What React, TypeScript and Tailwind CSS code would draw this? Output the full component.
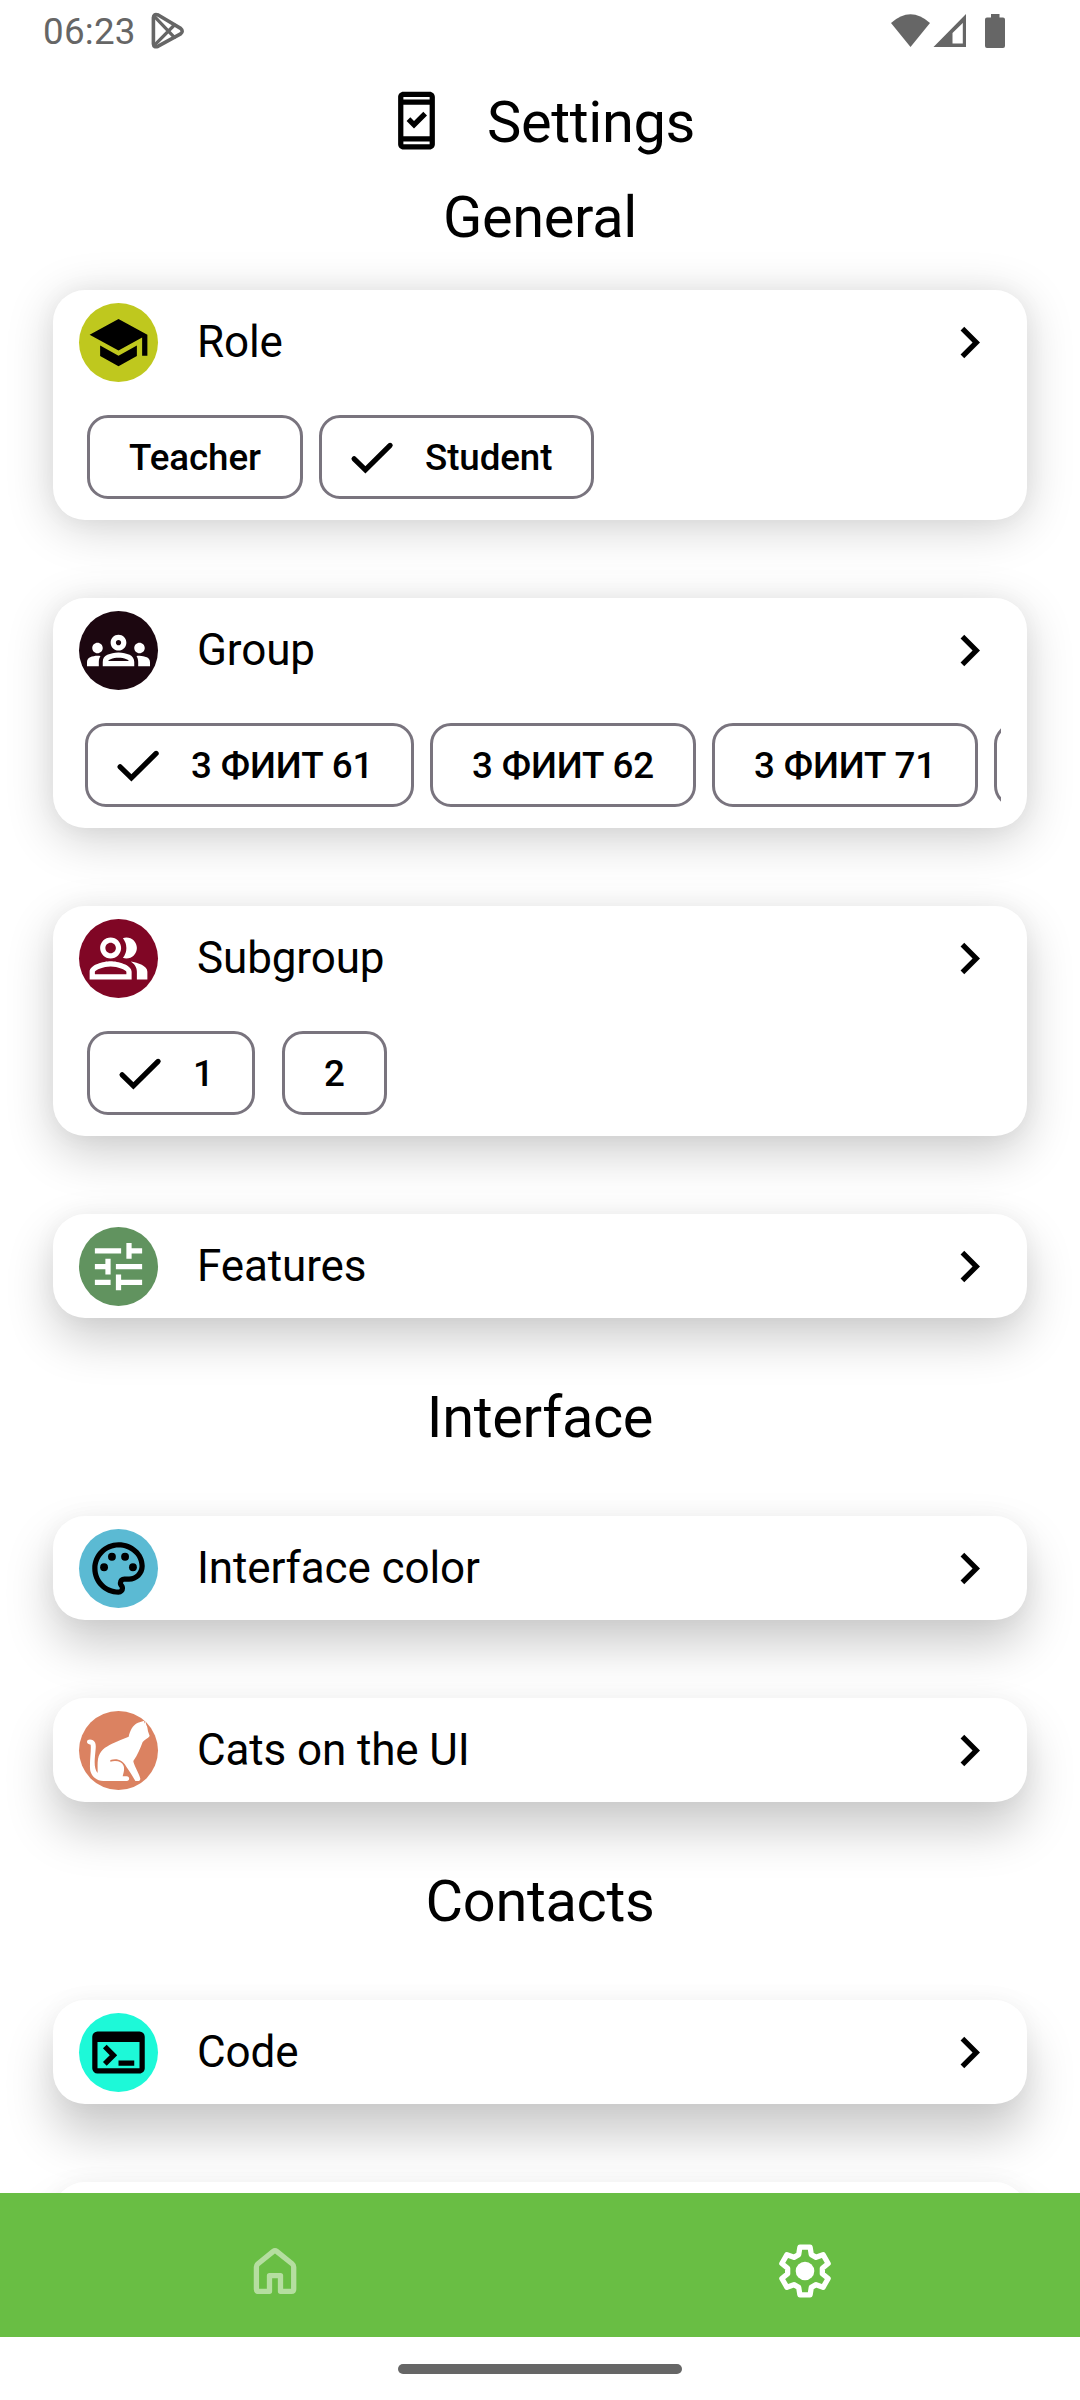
import type { ReactNode } from "react";
import {
  MdChevronRight,
  MdOutlineGroups,
  MdOutlinePalette,
  MdOutlinePeopleAlt,
  MdOutlineSecurityUpdateGood,
  MdSchool,
  MdTerminal,
  MdTune,
} from "react-icons/md";

function PlayIcon() {
  return (
    <svg width="36" height="38" viewBox="150 13 36 38" fill="none" stroke="#666666" strokeWidth="3.6" strokeLinejoin="round" strokeLinecap="round">
      <path d="M153.4 18.6Q153.6 14.2 158.2 16L180.6 29.4Q183.8 32.1 180.6 34.9L158.2 47.2Q153.6 49 153.4 45Z" />
      <path d="M154.3 17.3L174.4 38.3M154.3 46.3L174.4 26" strokeWidth="3.2" />
    </svg>
  );
}

function StatusIcons() {
  return (
    <svg width="116" height="36" viewBox="890 13 116 36" fill="#666666">
      <path d="M891 23Q910.500 5.500 930 23L910.500 47Z" />
      <path fillRule="evenodd" d="M966 14V47H933.500ZM962.800 23L952.500 33V43.500H962.800Z" />
      <path d="M991 14h8.500v3.500h3.500a2 2 0 0 1 2 2V46a2 2 0 0 1-2 2H987a2 2 0 0 1-2-2V19.500a2 2 0 0 1 2-2h4Z" />
    </svg>
  );
}

function CheckIcon() {
  return (
    <svg width="63" height="63" viewBox="0 0 24 24" fill="none" stroke="#000" strokeWidth="2" strokeLinecap="round" className="shrink-0">
      <path d="M5 12.500L9.300 16.700L18.700 7.400" />
    </svg>
  );
}

function CatIcon() {
  return (
    <svg width="79" height="79" viewBox="147 93 237 237" fill="#fff">
      <path d="M171 186C171 177 182 177 189 181C197 186 198 195 197 206C195 232 189 264 203 279C203 262 202 250 204 237C208 212 226 201 246 191Q270 180 296 170C300 152 307 136 324 128L343 122L342 131L346 124L349 135C352 139 353 146 354 154L359 168C354 176 343 179 338 186C330 206 324 224 310 243C310 252 325 276 331 296C331 301 328 303 324 303H316C308 289 300 275 289 260C277 238 260 235 241 240V245C262 240 276 246 281 258C284 269 281 277 278 289H290C300 290 300 303 290 303H220C197 303 180 284 180 264C179 238 184 211 182 194C176 193 171 191 171 186Z" />
    </svg>
  );
}

function HomeIcon() {
  return (
    <svg width="48" height="52" viewBox="251.500 2245 48 52" fill="none" stroke="#b5dea0" strokeWidth="5.300" strokeLinejoin="round">
      <path d="M256.900 2267Q256.900 2265 258.500 2263.700L273.800 2251.400Q275.500 2250 277.200 2251.400L292.600 2263.700Q294.200 2265 294.200 2267V2289.200Q294.200 2291.300 292 2291.300H281V2275.600H270V2291.300H259Q256.900 2291.300 256.900 2289.200Z" />
    </svg>
  );
}

const gearPoints = [0, 60, 120, 180, 240, 300]
  .flatMap((deg) => {
    const a = (deg * Math.PI) / 180;
    return [[-6.3, -16.4], [-5.1, -23.8], [5.1, -23.8], [6.3, -16.4]].map(
      ([x, y]) =>
        `${(x * Math.cos(a) - y * Math.sin(a)).toFixed(2)},${(x * Math.sin(a) + y * Math.cos(a)).toFixed(2)}`,
    );
  })
  .join(" ");

function GearIcon() {
  return (
    <svg width="60" height="60" viewBox="-30 -30 60 60">
      <polygon points={gearPoints} fill="none" stroke="#fff" strokeWidth="5.300" strokeLinejoin="round" />
      <circle r="9.300" fill="#fff" />
    </svg>
  );
}

function Chip({ label, checked, className }: { label?: string; checked?: boolean; className: string }) {
  return (
    <div
      className={`flex h-[84px] shrink-0 items-center whitespace-nowrap rounded-[21px] border-3 border-[#79747e] text-[36.75px] font-medium leading-none tracking-[-0.1px] ${
        checked ? "gap-[21px] pl-[19px]" : "justify-center"
      } ${className}`}
    >
      {checked && <CheckIcon />}
      {label && <span className="relative top-px">{label}</span>}
    </div>
  );
}

function Card({ icon, title, color, shadow, children }: { icon: ReactNode; title: string; color: string; shadow: string; children?: ReactNode }) {
  return (
    <section className={`mx-[53px] rounded-[32px] bg-white ${children ? "h-[230px]" : "h-[104px]"} ${shadow}`}>
      <div className="flex h-[105px] items-center px-[26px]">
        <div className={`flex size-[79px] shrink-0 items-center justify-center overflow-hidden rounded-full ${color}`}>{icon}</div>
        <h3 className="mb-[2px] ml-[39px] flex-1 text-[44px] leading-[56px] tracking-[-0.12px]">{title}</h3>
        <MdChevronRight size={63} />
      </div>
      {children && <div className="mr-[26px] mt-5 flex overflow-hidden">{children}</div>}
    </section>
  );
}

export default function App() {
  return (
    <div className="flex h-[2400px] w-[1080px] flex-col overflow-hidden bg-white font-['Roboto',sans-serif] text-black">
      <header className="flex h-[62px] shrink-0 items-center justify-between pl-[43px] pr-[74px]">
        <div className="flex items-center gap-[14px] text-[#666666]">
          <span className="mt-[2px] text-[36.75px] leading-[44px] tracking-[0.25px]">06:23</span>
          <PlayIcon />
        </div>
        <StatusIcons />
      </header>

      <main className="flex min-h-0 flex-1 flex-col overflow-hidden">
        <div className="mt-5 flex h-[83px] shrink-0 items-center justify-center gap-[39px]">
          <MdOutlineSecurityUpdateGood size={63} className="mb-[6px]" />
          <h1 className="mb-[3px] text-[57.75px] leading-[70px] tracking-[-0.35px]">Settings</h1>
        </div>
        <h2 className="mb-[21px] flex h-[104px] shrink-0 items-center justify-center text-[57.75px] leading-[70px] tracking-[-0.35px]">General</h2>

        <div className="flex shrink-0 flex-col gap-[78px]">
          <Card title="Role" color="bg-[#bfc81e]" icon={<MdSchool size={63} />} shadow="shadow-[0_0_24px_rgba(0,0,0,0.04),0_8px_48px_rgba(0,0,0,0.18)]">
            <Chip label="Teacher" className="ml-[34px] w-[216px]" />
            <Chip label="Student" checked className="ml-4 w-[275px]" />
          </Card>
          <Card title="Group" color="bg-[#1c0710]" icon={<MdOutlineGroups size={63} color="#fff" />} shadow="shadow-[0_0_24px_rgba(0,0,0,0.04),0_12px_48px_rgba(0,0,0,0.185)]">
            <Chip label="3 ФИИТ 61" checked className="ml-8 w-[329px]" />
            <Chip label="3 ФИИТ 62" className="ml-4 w-[266px]" />
            <Chip label="3 ФИИТ 71" className="ml-4 w-[266px]" />
            <Chip className="ml-4 w-[266px]" />
          </Card>
          <Card title="Subgroup" color="bg-[#800625]" icon={<MdOutlinePeopleAlt size={63} color="#fff" />} shadow="shadow-[0_0_24px_rgba(0,0,0,0.04),0_17px_48px_rgba(0,0,0,0.195)]">
            <Chip label="1" checked className="ml-[34px] w-[168px]" />
            <Chip label="2" className="ml-[27px] w-[105px]" />
          </Card>
          <Card title="Features" color="bg-[#61935f]" icon={<MdTune size={63} color="#fff" />} shadow="shadow-[0_0_24px_rgba(0,0,0,0.04),0_21px_48px_rgba(0,0,0,0.2)]" />
        </div>

        <h2 className="flex h-[198px] shrink-0 items-center justify-center text-[57.75px] leading-[70px] tracking-[-0.35px]">Interface</h2>

        <div className="flex shrink-0 flex-col gap-[78px]">
          <Card title="Interface color" color="bg-[#5bbad3]" icon={<MdOutlinePalette size={63} />} shadow="shadow-[0_0_24px_rgba(0,0,0,0.04),0_25px_48px_rgba(0,0,0,0.205)]" />
          <Card title="Cats on the UI" color="bg-[#db8261]" icon={<CatIcon />} shadow="shadow-[0_0_24px_rgba(0,0,0,0.04),0_28px_48px_rgba(0,0,0,0.205)]" />
        </div>

        <h2 className="flex h-[198px] shrink-0 items-center justify-center text-[57.75px] leading-[70px] tracking-[-0.35px]">Contacts</h2>

        <div className="flex shrink-0 flex-col gap-[78px]">
          <Card title="Code" color="bg-[#1df9d8]" icon={<MdTerminal size={63} />} shadow="shadow-[0_0_24px_rgba(0,0,0,0.04),0_32px_48px_rgba(0,0,0,0.205)]" />
          <div className="mx-[53px] h-[104px] rounded-[32px] bg-white shadow-[0_0_24px_rgba(0,0,0,0.04),0_31px_48px_rgba(0,0,0,0.205)]" />
        </div>
      </main>

      <nav className="flex h-[144px] shrink-0 items-center justify-between bg-[#69be44] pl-[251px] pr-[245px]">
        <div className="mt-3">
          <HomeIcon />
        </div>
        <div className="mt-[11px]">
          <GearIcon />
        </div>
      </nav>
      <footer className="flex h-[63px] shrink-0 items-center justify-center">
        <div className="h-[10px] w-[284px] rounded-full bg-[#666666]" />
      </footer>
    </div>
  );
}
